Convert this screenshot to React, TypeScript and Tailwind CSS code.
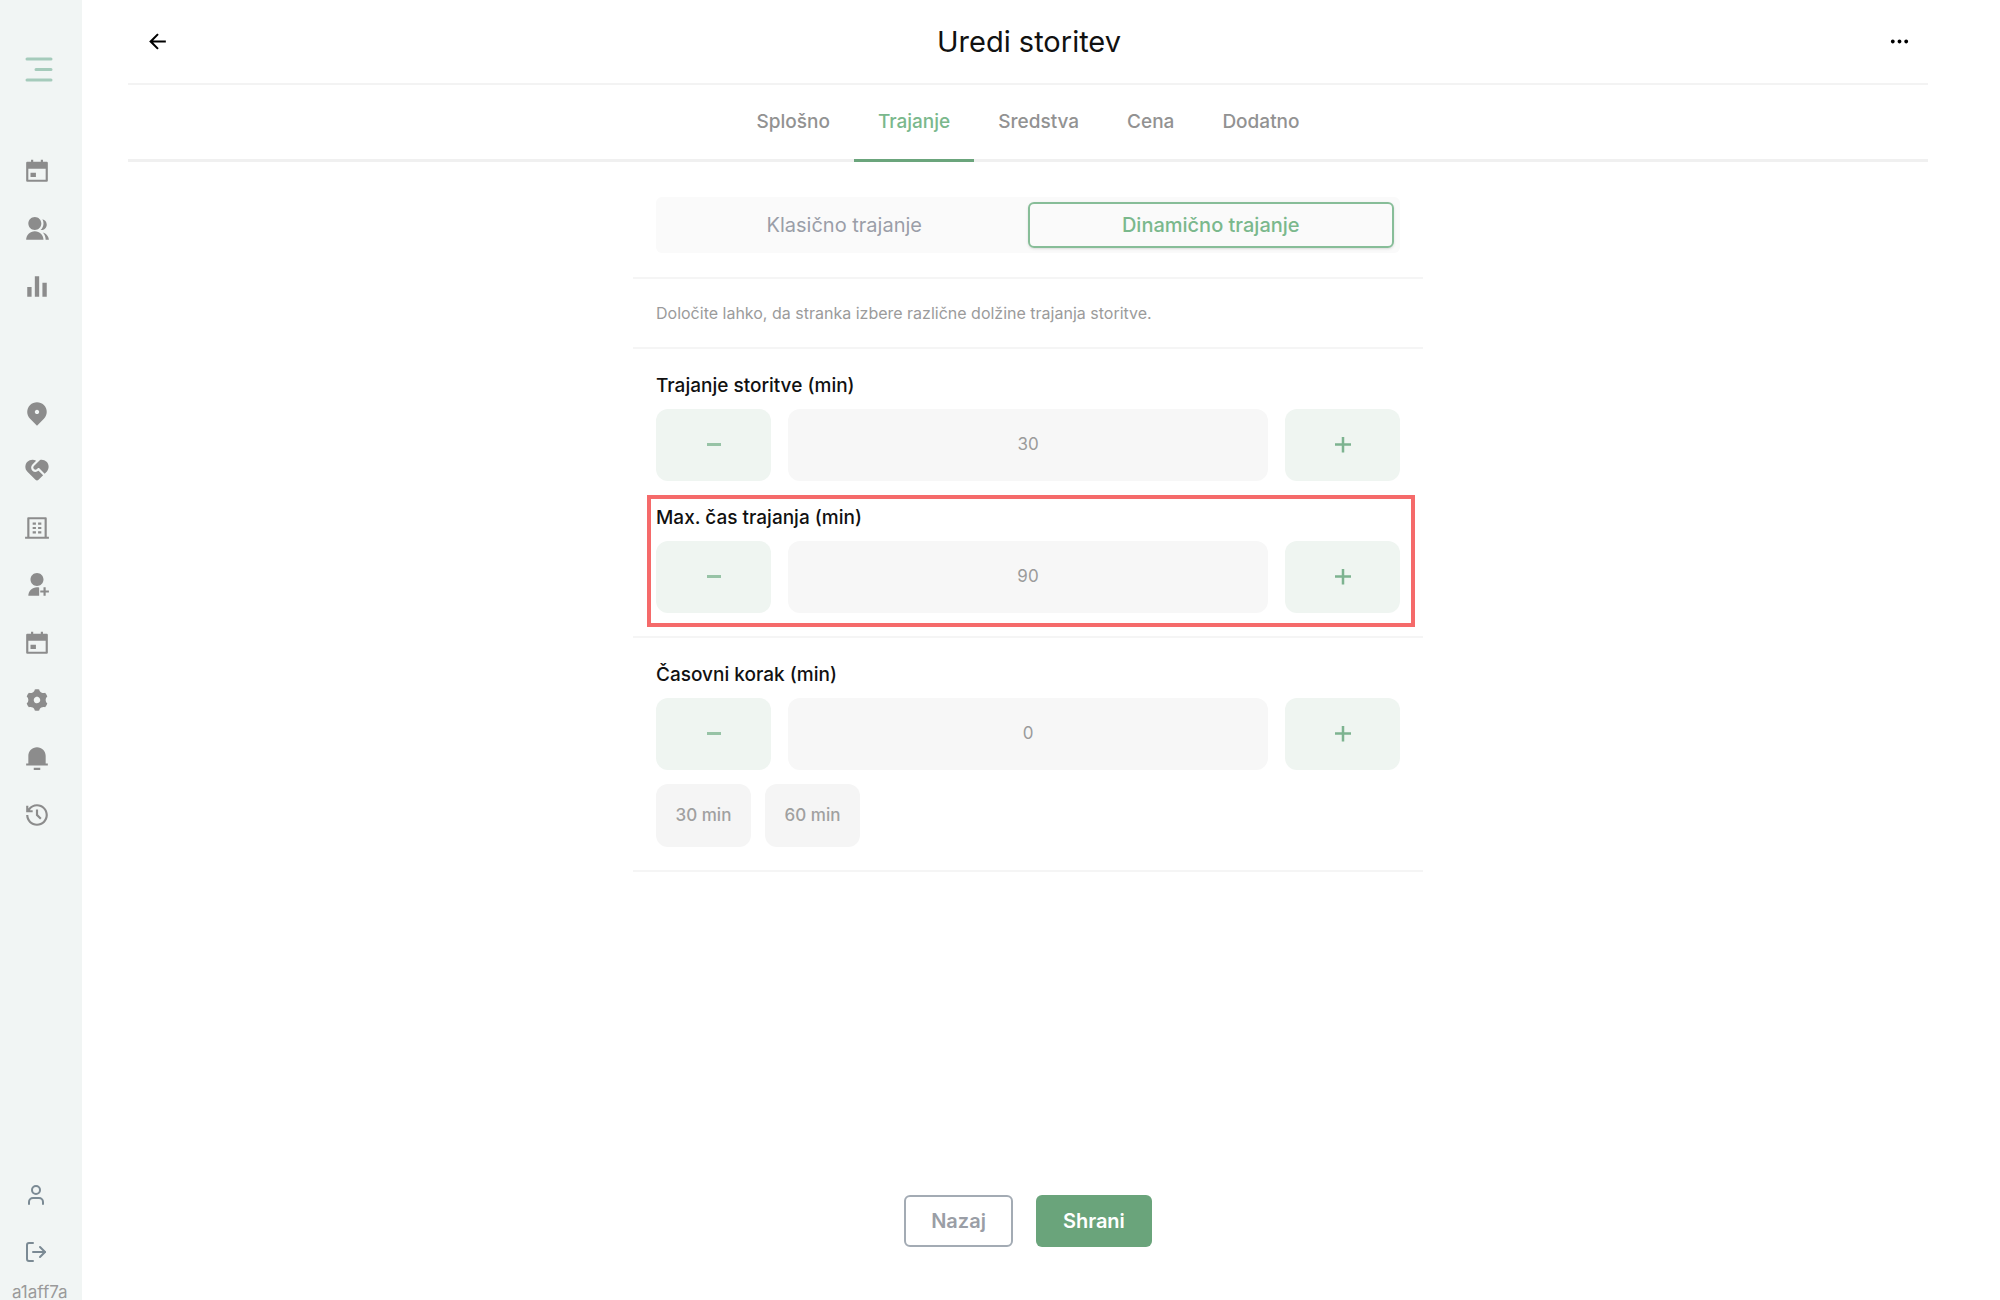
import type { ReactNode } from "react";
import { LogOut, User } from "lucide-react";
import {
  RiArrowLeftLine,
  RiBarChartFill,
  RiBuilding4Line,
  RiGroupFill,
  RiHistoryLine,
  RiMapPin2Fill,
  RiMoreFill,
  RiNotification3Fill,
  RiServiceFill,
  RiSettings4Fill,
  RiUserAddFill,
} from "react-icons/ri";

function MenuIcon() {
  return (
    <svg width="28" height="26" viewBox="0 0 28 26" fill="none" stroke="#a5cbbb" strokeWidth="3" strokeLinecap="round">
      <path d="M2 3H26M11 13.5H26M2 24H26" />
    </svg>
  );
}

function CalendarIcon() {
  return (
    <svg width="26" height="26" viewBox="0 0 24 24" fill="currentColor">
      <path d="M6.500 1.500h2v2h7v-2h2v2H21a1 1 0 0 1 1 1V21a1 1 0 0 1-1 1H3a1 1 0 0 1-1-1V4.500a1 1 0 0 1 1-1h3.500v-2ZM4 10v10h16V10H4Zm2 3.500h5v4H6v-4Z" />
    </svg>
  );
}

const mainNav: { label: string; icon: ReactNode }[] = [
  { label: "Koledar", icon: <CalendarIcon /> },
  { label: "Stranke", icon: <RiGroupFill size={26} /> },
  { label: "Statistika", icon: <RiBarChartFill size={26} /> },
];

const settingsNav: { label: string; icon: ReactNode }[] = [
  { label: "Lokacije", icon: <RiMapPin2Fill size={26} /> },
  { label: "Storitve", icon: <RiServiceFill size={26} /> },
  { label: "Podjetje", icon: <RiBuilding4Line size={26} /> },
  { label: "Zaposleni", icon: <RiUserAddFill size={26} /> },
  { label: "Urnik", icon: <CalendarIcon /> },
  { label: "Nastavitve", icon: <RiSettings4Fill size={26} className="rotate-90" /> },
  { label: "Obvestila", icon: <RiNotification3Fill size={26} /> },
  { label: "Zgodovina", icon: <RiHistoryLine size={26} /> },
];

const tabs = ["Splošno", "Trajanje", "Sredstva", "Cena", "Dodatno"];

function NavButton({ label, icon }: { label: string; icon: ReactNode }) {
  return (
    <button aria-label={label} className="flex flex-1 items-center text-[#8c8c8c]">
      {icon}
    </button>
  );
}

function Sidebar() {
  return (
    <aside className="flex w-[82px] shrink-0 flex-col bg-[#f1f5f4] pt-14">
      <button aria-label="Meni" className="ml-[25px]">
        <MenuIcon />
      </button>
      <nav className="mt-[60px] ml-6 flex h-[174px] flex-col">
        {mainNav.map((item) => (
          <NavButton key={item.label} {...item} />
        ))}
      </nav>
      <nav className="mt-[68px] ml-6 flex h-[460px] flex-col">
        {settingsNav.map((item) => (
          <NavButton key={item.label} {...item} />
        ))}
      </nav>
      <div className="mt-auto ml-6 flex flex-col gap-[33px] text-[#7b8a94]">
        <button aria-label="Profil">
          <User size={24} />
        </button>
        <button aria-label="Odjava">
          <LogOut size={24} />
        </button>
      </div>
      <p className="mt-5 ml-3 text-[17px] leading-4 text-[#9a9a9a]">a1aff7a</p>
    </aside>
  );
}

function Stepper({ id, label, value }: { id: string; label: string; value: number }) {
  return (
    <div>
      <label htmlFor={id} className="block text-[19px] leading-7 font-medium text-[#111]">
        {label}
      </label>
      <div className="mt-[9px] flex h-[72px] gap-[17px]">
        <button
          type="button"
          aria-label="Zmanjšaj"
          className="flex w-[115px] items-center justify-center rounded-xl bg-[#eff5f1] text-[#97c3a6]"
        >
          <svg width="16" height="16" viewBox="0 0 16 16" stroke="currentColor" strokeWidth="3">
            <path d="M1 7.500H15" />
          </svg>
        </button>
        <input
          id={id}
          inputMode="numeric"
          defaultValue={value}
          className="min-w-0 flex-1 rounded-xl bg-[#f7f7f7] text-center text-[17px] text-[#9b9b9b] outline-none"
        />
        <button
          type="button"
          aria-label="Povečaj"
          className="flex w-[115px] items-center justify-center rounded-xl bg-[#eff5f1] text-[#7db390]"
        >
          <svg width="16" height="16" viewBox="0 0 16 16" stroke="currentColor" strokeWidth="2.5">
            <path d="M0 7.500H16M8 0V15.500" />
          </svg>
        </button>
      </div>
    </div>
  );
}

export default function App() {
  return (
    <div className="flex min-h-screen bg-white font-['Inter',sans-serif]">
      <Sidebar />
      <main className="flex flex-1 flex-col pr-[72px] pl-[46px]">
        <header className="flex h-[85px] items-center justify-between border-b-2 border-[#f3f3f3] px-[17px]">
          <button aria-label="Nazaj" className="text-black">
            <RiArrowLeftLine size={25} />
          </button>
          <h1 className="text-[29px] leading-9 text-[#111]">Uredi storitev</h1>
          <button aria-label="Več" className="text-black">
            <RiMoreFill size={23} />
          </button>
        </header>

        <div role="tablist" className="flex h-[77px] justify-center border-b-3 border-[#f0f0f0]">
          {tabs.map((tab) => (
            <button
              key={tab}
              role="tab"
              aria-selected={tab === "Trajanje"}
              className={
                tab === "Trajanje"
                  ? "-mb-[3px] border-b-3 border-[#6ba57c] px-6 text-[19px] font-medium text-[#7ab88c]"
                  : "-mb-[3px] border-b-3 border-transparent px-6 text-[19px] font-medium text-[#929292]"
              }
            >
              {tab}
            </button>
          ))}
        </div>

        <form className="mx-auto mt-[35px] w-full max-w-[790px]">
          <div className="px-[23px] pb-6">
            <div className="grid grid-cols-2 rounded-md bg-[#fafafa] p-[5px] pr-[6px]">
              <button type="button" className="h-[46px] rounded-md text-xl text-[#9a9ea8]">
                Klasično trajanje
              </button>
              <button
                type="button"
                className="h-[46px] rounded-md border-2 border-[#87bd98] text-xl font-medium text-[#7ab88c] shadow-sm"
              >
                Dinamično trajanje
              </button>
            </div>
          </div>

          <p className="border-y-2 border-[#f5f5f5] px-[23px] py-[22px] text-base leading-6 text-[#9b9b9b]">
            Določite lahko, da stranka izbere različne dolžine trajanja storitve.
          </p>

          <div className="border-b-2 border-[#f5f5f5] p-[23px]">
            <Stepper id="duration" label="Trajanje storitve (min)" value={30} />
            <div className="relative mt-[23px]">
              <Stepper id="max-duration" label="Max. čas trajanja (min)" value={90} />
              <div className="pointer-events-none absolute -top-[9px] -right-[15px] -bottom-[14px] -left-[9px] border-4 border-[#f56a6a]" />
            </div>
          </div>

          <div className="border-b-2 border-[#f5f5f5] p-[23px]">
            <Stepper id="step" label="Časovni korak (min)" value={0} />
            <div className="mt-[14px] flex gap-[14px]">
              {["30 min", "60 min"].map((step) => (
                <button
                  key={step}
                  type="button"
                  className="h-[63px] w-[95px] rounded-xl bg-[#f5f5f5] text-[17px] font-medium text-[#a0a0a0]"
                >
                  {step}
                </button>
              ))}
            </div>
          </div>
        </form>

        <div className="mt-auto mb-[53px] flex justify-center gap-[23px]">
          <button className="h-[52px] rounded-md border-2 border-[#a3abb4] px-[25px] text-xl font-semibold text-[#9a9ea6]">
            Nazaj
          </button>
          <button className="h-[52px] rounded-md bg-[#6aa47b] px-[27px] text-xl font-semibold text-white">Shrani</button>
        </div>
      </main>
    </div>
  );
}
